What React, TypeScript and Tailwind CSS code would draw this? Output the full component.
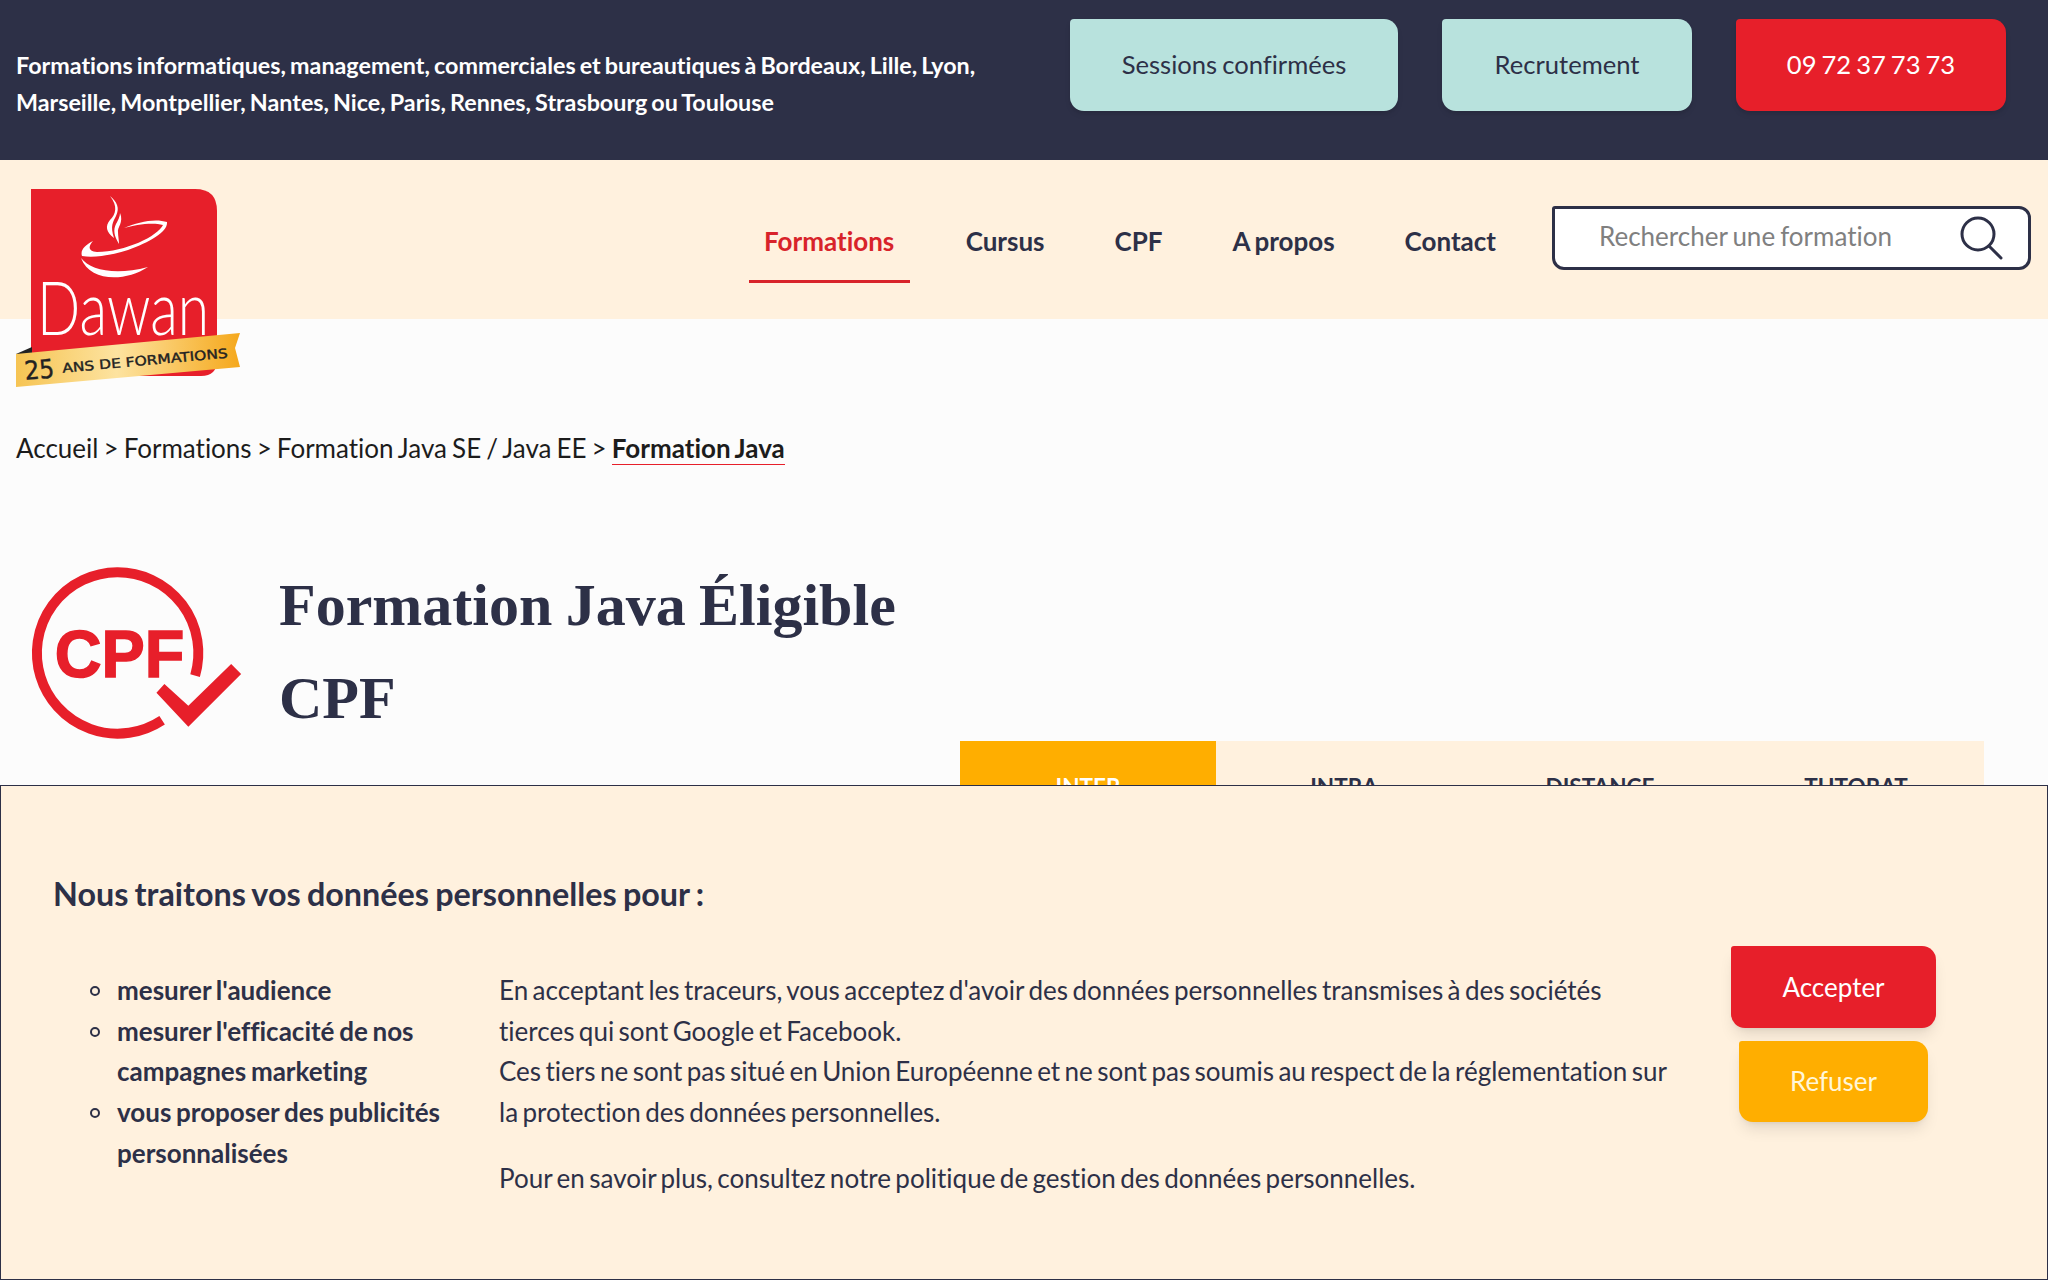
import React from "react";

const navLinks = ["Cursus", "CPF", "A propos", "Contact"];
const tabs = ["INTRA", "DISTANCE", "TUTORAT"];
const purposes = ["mesurer l'audience", "mesurer l'efficacité de nos campagnes marketing", "vous proposer des publicités personnalisées"];

function DawanLogo() {
    return (
        <svg viewBox="0 0 280 240" className="h-[240px] w-[280px] [word-spacing:0px]">
            <defs>
                <linearGradient id="ribbon" x1="0" y1="0" x2="1" y2="0">
                    <stop offset="0" stopColor="#f6c453" />
                    <stop offset="0.45" stopColor="#fde3a0" />
                    <stop offset="1" stopColor="#f5a81c" />
                </linearGradient>
            </defs>
            <path d="M31 19H195Q217 19 217 41V190Q217 206 201 206H31Z" fill="#e71f2a" />
            <path d="M16 184L32 177V184Z" fill="#222" />
            <g fill="#fff">
                <path d="M110 26C118 36 116 44 110 50C105 56 106 62 114 68C110 56 113 52 116 46C120 38 117 32 110 26Z" />
                <path d="M120 43C124 52 117 58 118 62C118 66 119 70 119 74C114 66 113 60 116 54C118 50 120 47 120 43Z" />
                <path d="M124 58C138 52 155 48 167 52C168 62 150 72 128 80C112 85 95 88 82 86C80 80 85 75 93 71C88 77 88 81 97 82C125 82 158 66 163 55C152 52 135 55 124 58Z" />
                <path d="M81 88C90 100 115 106 148 97C125 112 90 112 81 88Z" />
            </g>
            <text x="37" y="165" fill="#fff" fontFamily="Lato, sans-serif" fontWeight="300" fontSize="74" textLength="172" lengthAdjust="spacingAndGlyphs">Dawan</text>
            <path d="M16 184L240 163L235 178L240 197L16 217Z" fill="url(#ribbon)" />
            <g transform="rotate(-5.2 26 208)" fill="#222" stroke="#222" strokeWidth="0.4" fontFamily="'DejaVu Sans', sans-serif">
                <text x="25" y="210" fontSize="26" textLength="30" lengthAdjust="spacingAndGlyphs">25</text>
                <text x="63" y="206" fontSize="13" textLength="166" lengthAdjust="spacingAndGlyphs">ANS DE FORMATIONS</text>
            </g>
        </svg>
    );
}

function CpfIcon() {
    return (
        <svg viewBox="0 0 280 230" className="h-[230px] w-[279px] shrink-0">
            <path d="M195.8 135.6A81 81 0 1 0 162.7 180.5" fill="none" stroke="#e71f2a" strokeWidth="10" />
            <path d="M165 144L189 166L232 124L242 134L189 187L157 153Z" fill="#e71f2a" />
            <text x="55" y="137" fill="#e71f2a" stroke="#e71f2a" strokeWidth="1.5" fontFamily="'Liberation Sans', sans-serif" fontWeight="700" fontSize="66" textLength="130" lengthAdjust="spacingAndGlyphs">CPF</text>
        </svg>
    );
}

export default function App() {
    return (
        <div className="relative h-[1280px] w-[2048px] overflow-hidden bg-[#fcfcfc] font-['Lato','Liberation_Sans',sans-serif] text-[#2d3047] [font-variant-ligatures:none] [word-spacing:-1.6px]">
            {/* top bar */}
            <div className="flex h-[160px] items-start bg-[#2d3047] pl-4">
                <p className="mt-[47px] w-[1054px] text-[23.3px] leading-[37px] font-bold text-white">
                    Formations informatiques, management, commerciales et bureautiques à Bordeaux, Lille, Lyon, Marseille, Montpellier, Nantes, Nice, Paris, Rennes, Strasbourg ou Toulouse
                </p>
                <div className="mt-[19px] flex gap-[44px] text-[25.6px]">
                    <a className="flex h-[92px] w-[328px] items-center justify-center rounded-[14px] rounded-tl-[4px] bg-[#b8e2dd] pb-[2px] shadow-md">Sessions confirmées</a>
                    <a className="flex h-[92px] w-[250px] items-center justify-center rounded-[14px] rounded-tl-[4px] bg-[#b8e2dd] pb-[2px] shadow-md">Recrutement</a>
                    <a className="flex h-[92px] w-[270px] items-center justify-center rounded-[14px] rounded-tl-[4px] bg-[#e71f2a] pb-[2px] text-white shadow-md">09 72 37 73 73</a>
                </div>
            </div>

            {/* nav */}
            <div className="relative flex h-[159px] items-center justify-end bg-[#fff1de] pr-[17px]">
                <div className="absolute top-[10px] left-0 z-10">
                    <DawanLogo />
                </div>
                <nav className="mt-[4px] mr-[41px] flex items-center gap-[40px] text-[26px] font-bold">
                    <a className="mr-[1px] mb-[-2px] flex h-[81px] w-[161px] items-center justify-center border-b-[3px] border-[#d8232a] pt-[1px] text-[#d8232a]">Formations</a>
                    {navLinks.map((link) => (
                        <a key={link} className="mx-[15px]">{link}</a>
                    ))}
                </nav>
                <div className="mt-[-3px] flex h-[64px] w-[479px] items-center justify-between rounded-[12px] rounded-tl-[3px] border-[3px] border-[#2d3047] bg-white pr-[25px] pl-[44px]">
                    <span className="mb-[3px] text-[26px] text-[#808080]">Rechercher une formation</span>
                    <svg viewBox="0 0 44 44" className="h-[44px] w-[44px]" fill="none" stroke="#2d3047" strokeWidth="3" strokeLinecap="round">
                        <circle cx="19" cy="18" r="16" />
                        <path d="M30 30L42 42" />
                    </svg>
                </div>
            </div>

            {/* page content */}
            <div className="relative">
                <div className="px-4 pt-[111px] text-[26px] leading-[36px] text-[#1c1c1c]">
                    Accueil &gt; Formations &gt; Formation Java SE / Java EE &gt; <b className="border-b border-[#e71f2a]">Formation Java</b>
                </div>
                <div className="flex pt-[74px]">
                    <CpfIcon />
                    <h1 className="w-[660px] pt-[19px] font-['Liberation_Serif',serif] text-[60px] leading-[93px] font-bold">Formation Java Éligible CPF</h1>
                </div>
                <div className="absolute top-[422px] left-[960px] flex h-[120px] w-[1024px] bg-[#fff1de] text-[22.5px] font-bold">
                    <div className="flex w-[256px] justify-center bg-[#ffae00] pt-[29px] text-white">INTER</div>
                    {tabs.map((tab) => (
                        <div key={tab} className="flex w-[256px] justify-center pt-[29px]">{tab}</div>
                    ))}
                </div>
            </div>

            {/* cookie banner */}
            <div className="absolute right-0 bottom-0 left-0 z-20 h-[495px] border border-[#2d3047] bg-[#fff1de] pt-[85px] pl-[52px]">
                <h2 className="text-[32.3px] leading-[46px] font-bold">Nous traitons vos données personnelles pour :</h2>
                <div className="mt-[30px] flex items-start">
                    <ul className="mt-[23px] w-[446px] pl-[37px] text-[26px] leading-[40.7px] font-bold">
                        {purposes.map((item) => (
                            <li key={item} className="flex gap-[17px]">
                                <span className="mt-[16px] h-[10px] w-[10px] shrink-0 rounded-full border-2 border-[#2d3047]" />
                                <span>{item}</span>
                            </li>
                        ))}
                    </ul>
                    <div className="mt-[23px] w-[1175px] text-[26px] leading-[40.7px] [word-spacing:-2.2px]">
                        <p>
                            En acceptant les traceurs, vous acceptez d'avoir des données personnelles transmises à des sociétés tierces qui sont Google et Facebook.
                            <br />
                            Ces tiers ne sont pas situé en Union Européenne et ne sont pas soumis au respect de la réglementation sur la protection des données personnelles.
                        </p>
                        <p className="mt-[25px]">Pour en savoir plus, consultez notre politique de gestion des données personnelles.</p>
                    </div>
                    <div className="mt-[-1px] ml-[57px] flex w-[205px] flex-col items-center gap-[13px] text-[26px]">
                        <button className="flex h-[82px] w-[205px] items-center justify-center rounded-[14px] rounded-tl-[3px] bg-[#e71f2a] text-white shadow-lg">Accepter</button>
                        <button className="flex h-[81px] w-[189px] items-center justify-center rounded-[14px] rounded-tl-[3px] bg-[#ffae00] text-[#fff6d8] shadow-lg">Refuser</button>
                    </div>
                </div>
            </div>
        </div>
    );
}
